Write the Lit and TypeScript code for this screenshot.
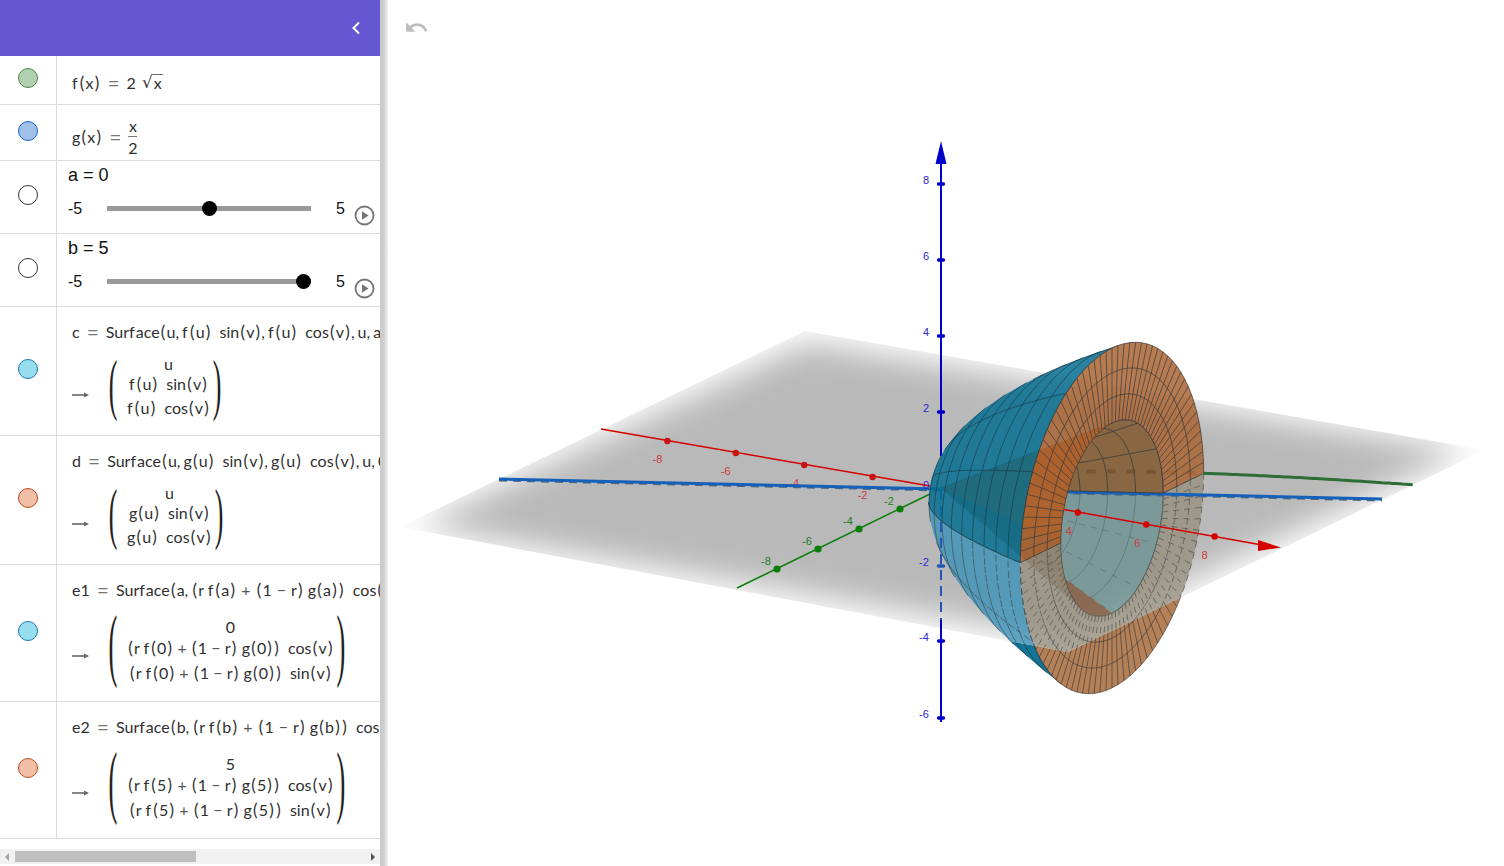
import { LitElement, html, css, svg } from "lit";
import { customElement } from "lit/decorators.js";

type P = [number, number];
const OX = 941, OY = 488;
const proj = (x: number, y: number, z: number): P => [OX + 34.2 * x + 20.5 * y, OY + 6 * x - 10 * y - 38 * z];
const f = (u: number) => 2 * Math.sqrt(u);
const g = (u: number) => u / 2;
const PI = Math.PI;

function quadPath(quads: P[][]): string {
  let d = "";
  for (const q of quads) {
    let a = 0;
    for (let i = 0; i < q.length; i++) {
      const n = q[(i + 1) % q.length];
      a += q[i][0] * n[1] - n[0] * q[i][1];
    }
    const pts = a < 0 ? [...q].reverse() : q;
    d += "M" + pts.map((p) => p[0].toFixed(1) + " " + p[1].toFixed(1)).join("L") + "Z";
  }
  return d;
}
const seg = (a: P, b: P) => `M${a[0].toFixed(1)} ${a[1].toFixed(1)}L${b[0].toFixed(1)} ${b[1].toFixed(1)}`;

function surface(r: (u: number) => number, dr: (u: number) => number, v0: number, v1: number, facing: "front" | "all", ringsN: number, medStep: number) {
  const NT = 30, NV = 48;
  const uAt = (i: number) => { const t = (i / NT) * Math.sqrt(5); return t * t; };
  const pt = (u: number, v: number) => proj(u, r(u) * Math.sin(v), r(u) * Math.cos(v));
  const quads: P[][] = [];
  let lines = "";
  const vis = (u: number, v: number) => facing === "all" || -0.6 * dr(Math.max(u, 0.02)) - Math.sin(v) + 0.358 * Math.cos(v) > 0;
  for (let i = 0; i < NT; i++) {
    for (let j = 0; j < NV; j++) {
      const a = uAt(i), b = uAt(i + 1);
      const c = v0 + ((v1 - v0) * j) / NV, e = v0 + ((v1 - v0) * (j + 1)) / NV;
      if (vis((a + b) / 2, (c + e) / 2)) quads.push([pt(a, c), pt(b, c), pt(b, e), pt(a, e)]);
    }
  }
  for (let k = 1; k <= ringsN; k++) {
    const u = (5 * k) / ringsN;
    for (let j = 0; j < NV; j++) {
      const c = v0 + ((v1 - v0) * j) / NV, e = v0 + ((v1 - v0) * (j + 1)) / NV;
      if (vis(u, (c + e) / 2)) lines += seg(pt(u, c), pt(u, e));
    }
  }
  const first = Math.ceil(v0 / medStep - 1e-6);
  for (let m = first; m * medStep <= v1 + 1e-6; m++) {
    const v = m * medStep;
    for (let i = 0; i < NT; i++) {
      const a = uAt(i), b = uAt(i + 1);
      if (vis((a + b) / 2, v)) lines += seg(pt(a, v), pt(b, v));
    }
  }
  return { d: quadPath(quads), lines };
}

function annulus(v0: number, v1: number) {
  const NV = 96, rs = [2.5, 3.16, 3.82, 4.472];
  const pt = (r: number, v: number) => proj(5, r * Math.sin(v), r * Math.cos(v));
  const quads: P[][] = [];
  let lines = "";
  const steps = Math.round(((v1 - v0) / (2 * PI)) * NV);
  for (let j = 0; j < steps; j++) {
    const c = v0 + ((v1 - v0) * j) / steps, e = v0 + ((v1 - v0) * (j + 1)) / steps;
    quads.push([pt(2.5, c), pt(4.472, c), pt(4.472, e), pt(2.5, e)]);
    for (const r of rs) lines += seg(pt(r, c), pt(r, e));
  }
  for (let j = 0; j <= steps; j++) {
    const c = v0 + ((v1 - v0) * j) / steps;
    lines += seg(pt(2.5, c), pt(4.472, c));
  }
  return { d: quadPath(quads), lines };
}

const H = PI / 2;
const tealUp = surface(f, (u) => 1 / Math.sqrt(u), -H, H, "front", 10, PI / 6);
const tealLow = surface(f, (u) => 1 / Math.sqrt(u), H, 3 * H, "front", 10, PI / 6);
const coneFar = surface(g, () => 0.5, 0, H, "all", 8, PI / 6);
const coneNear = surface(g, () => 0.5, -H, 0, "all", 8, PI / 6);
const coneLowFar = surface(g, () => 0.5, H, PI, "all", 8, PI / 6);
const coneLowNear = surface(g, () => 0.5, PI, 3 * H, "all", 8, PI / 6);
const ringUp = annulus(-H, H);
const ringLow = annulus(H, 3 * H);

const curve = (fn: (u: number) => P, a: number, b: number, n = 60) => {
  let s = "";
  for (let i = 0; i <= n; i++) {
    const p = fn(a + ((b - a) * i) / n);
    s += (i ? "L" : "M") + p[0].toFixed(1) + " " + p[1].toFixed(1);
  }
  return s;
};
const greenCurve = (u: number) => proj(u, f(u), 0);

const PLANE = "400,527 805,331 1485,450 1068,652";
const PLANE_PATH = "M400 527L805 331L1485 450L1068 652Z";

const xTicks = [-8, -6, -4, -2, 4, 6, 8];
const yTicks = [-8, -6, -4, -2];
const zTicks: [number, number][] = [[8, 184], [6, 260], [4, 336], [2, 412], [-2, 566], [-4, 641], [-6, 718]];

const scene = svg`
  <defs>
    <clipPath id="pc"><polygon points=${PLANE}></polygon></clipPath>
    <clipPath id="po"><path clip-rule="evenodd" d="M388 0H1504V866H388Z ${PLANE_PATH}"></path></clipPath>
    <filter id="bl" x="-20%" y="-30%" width="140%" height="160%"><feGaussianBlur stdDeviation="16"></feGaussianBlur></filter>
  </defs>

  <g clip-path="url(#po)">
    <path d=${tealLow.d} fill="rgb(5,110,145)" opacity=".95"></path>
    <path d=${ringLow.d} fill="rgb(170,110,65)" opacity=".88"></path>
    <path d=${tealLow.lines + ringLow.lines} fill="none" stroke="#333" stroke-width=".8" opacity=".75"></path>
  </g>

  <g clip-path="url(#pc)">
    <polygon points="416,526 807,342 1468,450 1067,640" fill="#b9b9b9" filter="url(#bl)"></polygon>
    <path d=${coneLowFar.d} fill="rgb(100,140,140)" opacity=".72"></path>
    <path d=${coneLowNear.d} fill="rgb(125,85,55)" opacity=".8"></path>
    <path d=${tealLow.d} fill="rgb(60,145,185)" opacity=".8"></path>
    <path d=${ringLow.d} fill="rgb(150,142,125)" opacity=".78"></path>
    <path d=${tealLow.lines} fill="none" stroke="#3d4f55" stroke-width=".9" stroke-dasharray="7 7" opacity=".8"></path>
    <path d=${ringLow.lines} fill="none" stroke="#4a4a44" stroke-width=".9" stroke-dasharray="6 5" opacity=".7"></path>
    <path d=${coneLowFar.lines} fill="none" stroke="#4a5a5a" stroke-width=".8" stroke-dasharray="6 9" opacity=".6"></path>
  </g>

  <path d="M941 164V456" stroke="#0000cc" stroke-width="2" fill="none"></path>
  <path d="M941 490V620" stroke="#1f55b5" stroke-width="2" stroke-dasharray="10 6" fill="none"></path>
  <path d="M941 620V722" stroke="#0000cc" stroke-width="2" fill="none"></path>
  <polygon points="941,141 946.5,164 935.5,164" fill="#0000cc"></polygon>
  ${zTicks.map(([z, y]) => svg`<path d="M938.5 ${y}H943.5" stroke=${z === -2 ? "#1f55b5" : "#0000cc"} stroke-width="3.4" stroke-linecap="round"></path>
      <text x=${z > 0 ? 926 : 924} y=${y} class="tick" text-anchor="middle" fill="#2a2ad0">${z}</text>`)}

  <path d="M601 429L930 486" stroke="#d50000" stroke-width="1.5" fill="none"></path>
  <path d="M737 588L930 494" stroke="#0b7d0b" stroke-width="1.5" fill="none"></path>
  ${xTicks.filter((t) => t < 0).map((t) => {
    const p = proj(t, 0, 0);
    return svg`<circle cx=${p[0]} cy=${p[1] + 1} r="3.2" fill="#c81414"></circle>
      <text x=${p[0] - 10} y=${p[1] + 23} class="tick" text-anchor="middle" fill="#cf3a3a">${t}</text>`;
  })}
  ${yTicks.map((t) => {
    const p = proj(0, t, 0);
    return svg`<circle cx=${p[0]} cy=${p[1] + 1} r="3.6" fill="#0b7d0b"></circle>
      <text x=${p[0] - 11} y=${p[1] - 3} class="tick" text-anchor="middle" fill="#1a7d1a">${t}</text>`;
  })}

  <path d="M499 480.5L1382 500.5" stroke="#4e6a80" stroke-width="2" stroke-dasharray="8 6" fill="none"></path>
  <path d="M499 479L1382 499" stroke="#1560b8" stroke-width="3" fill="none"></path>
  <path d=${curve(greenCurve, 5, 10)} stroke="#2c6e34" stroke-width="3" fill="none"></path>

  <path d=${coneFar.d} fill="rgb(136,100,62)" opacity=".96"></path>
  <path d=${coneFar.lines} fill="none" stroke="#3a3a3a" stroke-width="1" opacity=".8"></path>
  <path d=${coneNear.d} fill="rgb(190,90,20)" opacity=".96"></path>
  <path d=${curve(greenCurve, 2.4, 5)} stroke="#6d4a2c" stroke-width="4" stroke-dasharray="9 11" fill="none" opacity=".65"></path>
  <path d=${tealUp.d} fill="rgb(5,110,145)" opacity=".85"></path>
  <path d=${tealUp.lines} fill="none" stroke="#163440" stroke-width=".8" opacity=".75"></path>
  <path d=${ringUp.d} fill="rgb(170,100,50)" opacity=".85"></path>
  <path d=${ringUp.lines} fill="none" stroke="#3a3a3a" stroke-width=".9" opacity=".8"></path>

  <path d="M1064 509.5L1262 545" stroke="#d50000" stroke-width="1.5" fill="none"></path>
  <polygon points="1258,540 1281,547.5 1258,551" fill="#d50000"></polygon>
  ${xTicks.filter((t) => t > 0).map((t) => {
    const p = proj(t, 0, 0);
    return svg`<circle cx=${p[0]} cy=${p[1] + 0.5} r="3.2" fill="#d50000"></circle>
      <text x=${p[0] - 9 + (t === 8 ? -1 : 0)} y=${p[1] + 23} class="tick" text-anchor="middle" fill="#cf3a3a">${t}</text>`;
  })}
  <text x="926" y="489" class="tick" text-anchor="middle" fill="#2a2ad0">0</text>
`;

// Spreads math text the way the reference typesetter does.
function fmt(s: string) {
  const out: unknown[] = [];
  for (let i = 0; i < s.length; i++) {
    const c = s[i];
    if (c === "(" || c === ")") out.push(html`<span class="p">${c}</span>`);
    else if (c === "f") out.push(html`<span class="fn">${c}</span>`);
    else if (c === "+" || c === "−") out.push(html`<span class="op">${c}</span>`);
    else if (c === ",") out.push(html`<span class="cm">${c}</span>`);
    else if (c === "~") out.push(html`<span class="gap"></span>`);
    else out.push(c);
  }
  return out;
}

@customElement("app-root")
export class AppRoot extends LitElement {
  static styles = css`
    :host { display: block; width: 1504px; height: 866px; overflow: hidden; background: #fff; }
    .page { display: flex; height: 866px; }
    .panel { width: 380px; flex: none; display: flex; flex-direction: column; position: relative; background: #fff; }
    .splitter { width: 8px; flex: none; background: linear-gradient(to right, #c9c9c9 0, #cfcfcf 50%, #f2f2f2 100%); }
    .canvas { flex: 1; position: relative; min-width: 0; }
    .canvas svg.scene { display: block; width: 1116px; height: 866px; }
    .undo { position: absolute; left: 16px; top: 15px; width: 25px; height: 25px; fill: #bdbdbd; }
    .tick { font: 11px "Liberation Sans", sans-serif; }

    .head { height: 56px; flex: none; background: #6557d2; display: flex; align-items: center; justify-content: flex-end; padding-right: 19px; }
    .head svg { width: 10px; height: 16px; fill: none; stroke: #fff; stroke-width: 2; }

    .list { flex: 1; min-height: 0; overflow: hidden; }
    .row { display: flex; border-bottom: 1px solid #dcdcdc; overflow: hidden; }
    .mcol { width: 56px; flex: none; border-right: 1px solid #dcdcdc; display: flex; align-items: center; justify-content: center; padding-bottom: 4px; }
    .marble { width: 18px; height: 18px; border-radius: 50%; border: 1px solid #333; }
    .body { flex: 1; min-width: 0; font: 16px Lato, "Open Sans", sans-serif; color: #2f2f2f; white-space: nowrap; }

    .h48 { height: 48px; } .h55 { height: 55px; } .h72 { height: 72px; } .h128 { height: 128px; } .h136 { height: 136px; }

    .p { margin: 0 1.2px; font-size: 17px; }
    .fn { margin-right: 1px; }
    .op { margin: 0 5px; color: #555; }
    .cm { margin-right: 3px; }
    .gap { display: inline-block; width: 8px; }
    .matrix .op { margin: 0 4.2px; }

    .mline { display: flex; align-items: center; height: 20px; padding-left: 15px; }
    .mline > span { flex: none; }
    .eq { color: #777; margin: 0 7px; font-size: 21px; }
    .simple { padding-top: 16px; }
    .sq { display: inline-flex; align-items: flex-end; margin-left: 6px; }
    .sq .rad { font: 17px "DejaVu Sans", sans-serif; line-height: 20px; color: #333; }
    .sq .inner { border-top: 1px solid #666; line-height: 15px; padding: 0 1px; margin-bottom: 2px; }
    .frac { display: inline-flex; flex-direction: column; align-items: center; line-height: 19px; }
    .frac i { font-style: normal; }
    .frac b { display: block; width: 9px; height: 1px; background: #777; margin: 1px 0; }
    .gline { display: flex; align-items: center; padding: 13px 0 0 15px; height: 36px; }

    .calc { display: flex; align-items: center; margin-top: 19px; padding-left: 15px; height: 61px; }
    .calc.tall { height: 71px; margin-top: 17px; }
    .arrow { width: 17px; height: 8px; margin: 9px 19px 0 0; flex: none; }
    .paren { display: flex; justify-content: center; width: 10px; height: 61px; flex: none; font: 68px/61px "Liberation Serif", serif; color: #222; transform: translateY(-6px) scaleX(.38); }
    .tall .paren { height: 71px; font: 80px/71px "Liberation Serif", serif; transform: translateY(-7px) scaleX(.33); }
    .matrix { display: flex; flex-direction: column; align-items: center; align-self: flex-start; padding: 0 2px 0 9px; }
    .tall .matrix { padding: 0 2px 0 9px; }
    .matrix div { line-height: 20px; }
    .matrix div:nth-child(1) { line-height: 10px; margin-bottom: 5px; margin-top: -1px; }
    .matrix div:nth-child(3) { line-height: 24px; margin-top: 2px; }
    .tall .matrix div:nth-child(1) { line-height: 22px; margin: 0; }
    .tall .matrix div:nth-child(3) { line-height: 24px; margin-top: 3px; }
    .top { padding-top: 14px; }

    .sl { font-family: "Liberation Sans", sans-serif; color: #111; padding-left: 11px; position: relative; }
    .sl .title { font-size: 18px; line-height: 22px; padding-top: 3px; }
    .sl .ctl { display: flex; align-items: center; font-size: 16px; height: 20px; margin-top: 12px; }
    .sl .ctl > span { padding-top: 2px; }
    .sl .lo { width: 39px; }
    .track { width: 204px; height: 5px; background: #999; position: relative; margin-right: 25px; }
    .thumb { position: absolute; top: -5px; width: 15px; height: 15px; border-radius: 50%; background: #000; }
    .play { width: 21px; height: 21px; margin-left: 9px; margin-top: 14px; flex: none; }

    .hbar { height: 15px; flex: none; background: #f1f1f1; position: relative; margin-bottom: 2px; }
    .hbar .thumbbar { position: absolute; left: 15px; width: 181px; top: 2px; height: 11px; background: #bfbfbf; }
    .hbar .l { position: absolute; left: 5px; top: 4px; width: 0; height: 0; border: 4px solid transparent; border-left: 0; border-right: 4px solid #a3a3a3; }
    .hbar .rr { position: absolute; left: 371px; top: 4px; width: 0; height: 0; border: 4px solid transparent; border-right: 0; border-left: 4px solid #505050; }
  `;

  private marble(fill: string, border: string) {
    return html`<div class="mcol"><div class="marble" style="background:${fill};border-color:${border}"></div></div>`;
  }
  private arrow() {
    return html`<svg class="arrow" viewBox="0 0 17 8"><path d="M0 4H14" stroke="#666" stroke-width="1.6"></path><path d="M12 1.5L17 4L12 6.5Z" fill="#666"></path></svg>`;
  }
  private slider(name: string, val: number) {
    const left = ((val + 5) / 10) * 189;
    return html`<div class="row h72">
      ${this.marble("#fff", "#333")}
      <div class="body sl">
        <div class="title">${name} = ${val}</div>
        <div class="ctl">
          <span class="lo">-5</span>
          <div class="track"><div class="thumb" style="left:${left}px"></div></div>
          <span>5</span>
          <svg class="play" viewBox="0 0 21 21"><circle cx="10.5" cy="10.5" r="9" fill="none" stroke="#757575" stroke-width="1.8"></circle><path d="M8 6.2L14.6 10.5L8 14.8Z" fill="#757575"></path></svg>
        </div>
      </div>
    </div>`;
  }
  private calc(name: string, def: string, rows: string[], tall = false) {
    return html`<div class="top">
      <div class="mline"><span>${name}</span><span class="eq">=</span><span>${fmt(def)}</span></div>
      <div class="calc ${tall ? "tall" : ""}">
        ${this.arrow()}
        <span class="paren">(</span>
        <div class="matrix">${rows.map((r) => html`<div>${fmt(r)}</div>`)}</div>
        <span class="paren">)</span>
      </div>
    </div>`;
  }

  render() {
    return html`<div class="page">
      <div class="panel">
        <div class="head"><svg viewBox="0 0 10 16"><path d="M8 2.5L2.5 8L8 13.5"></path></svg></div>
        <div class="list">
          <div class="row h48">
            ${this.marble("#b0d0b0", "#4a8a4a")}
            <div class="body simple"><div class="mline"><span>${fmt("f(x)")}</span><span class="eq">=</span><span>2</span><span class="sq"><span class="rad">√</span><span class="inner">x</span></span></div></div>
          </div>
          <div class="row h55">
            ${this.marble("#a0c0e8", "#1565c0")}
            <div class="body"><div class="gline"><span>${fmt("g(x)")}</span><span class="eq">=</span><span class="frac"><i>x</i><b></b><i>2</i></span></div></div>
          </div>
          ${this.slider("a", 0)}
          ${this.slider("b", 5)}
          <div class="row h128">
            ${this.marble("#98dcf0", "#1a7ab0")}
            <div class="body">${this.calc("c", "Surface(u,f(u)~sin(v),f(u)~cos(v),u,a", ["u", "f(u)~sin(v)", "f(u)~cos(v)"])}</div>
          </div>
          <div class="row h128">
            ${this.marble("#f0bfa5", "#c04a20")}
            <div class="body">${this.calc("d", "Surface(u,g(u)~sin(v),g(u)~cos(v),u,0", ["u", "g(u)~sin(v)", "g(u)~cos(v)"])}</div>
          </div>
          <div class="row h136">
            ${this.marble("#98dcf0", "#1a7ab0")}
            <div class="body">${this.calc("e1", "Surface(a,(r f(a)+(1−r) g(a))~cos(v)", ["0", "(r f(0)+(1−r) g(0))~cos(v)", "(r f(0)+(1−r) g(0))~sin(v)"], true)}</div>
          </div>
          <div class="row h136">
            ${this.marble("#f0bfa5", "#c04a20")}
            <div class="body">${this.calc("e2", "Surface(b,(r f(b)+(1−r) g(b))~cos(v)", ["5", "(r f(5)+(1−r) g(5))~cos(v)", "(r f(5)+(1−r) g(5))~sin(v)"], true)}</div>
          </div>
        </div>
        <div class="hbar"><span class="l"></span><div class="thumbbar"></div><span class="rr"></span></div>
      </div>
      <div class="splitter"></div>
      <div class="canvas">
        <svg class="scene" viewBox="388 0 1116 866">${scene}</svg>
        <svg class="undo" viewBox="0 0 24 24"><path d="M12.5 8c-2.65 0-5.05.99-6.9 2.6L2 7v9h9l-3.62-3.62c1.39-1.16 3.16-1.88 5.12-1.88 3.54 0 6.55 2.31 7.6 5.5l2.37-.78C21.08 11.03 17.15 8 12.5 8z"></path></svg>
      </div>
    </div>`;
  }
}
